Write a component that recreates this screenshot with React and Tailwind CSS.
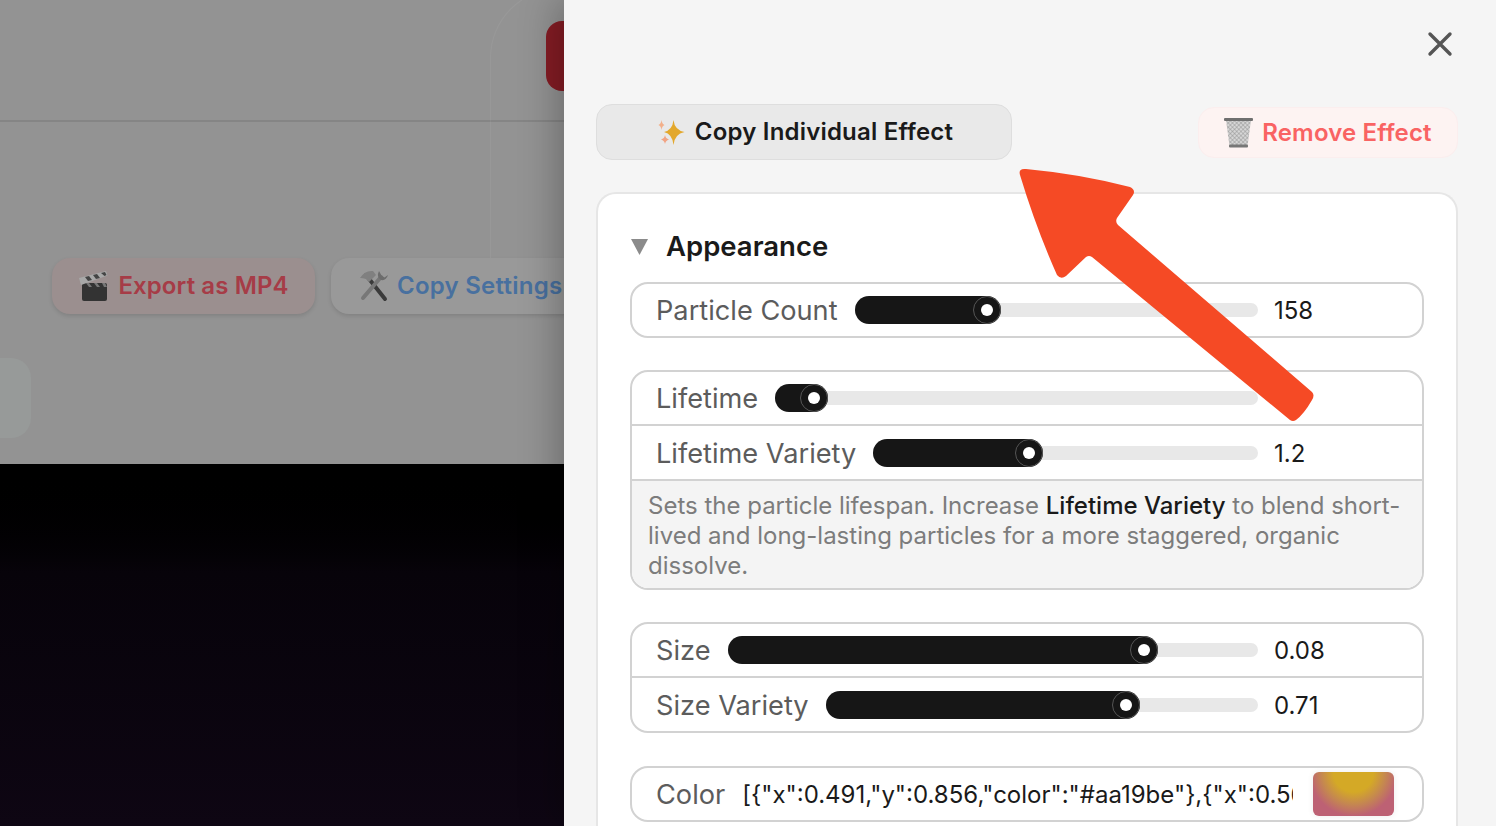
import React from 'react';

// Small drawn emoji, the picture uses Apple colour glyphs
const Sparkles = () => (
  <svg width="27" height="25" viewBox="0 0 27 25" className="shrink-0">
    <path d="M15.500 0 Q16.500 10 26.500 12 Q16.500 14 15.500 25 Q14.500 14 6 12 Q14.500 10 15.500 0Z" fill="#e3a82c" />
    <path d="M3.500 0 Q4 4 6.500 5 Q4 6 3.500 10 Q3 6 .5 5 Q3 4 3.500 0Z" fill="#f3b08a" />
    <path d="M7 15 Q7.500 18.500 11 19.500 Q7.500 20.500 7 24 Q6.500 20.500 3 19.500 Q6.500 18.500 7 15Z" fill="#f2a484" />
  </svg>
);

const Basket = () => (
  <svg width="29" height="30" viewBox="0 0 29 30" className="shrink-0">
    <defs>
      <pattern id="mesh" width="3" height="3" patternUnits="userSpaceOnUse" patternTransform="rotate(45)">
        <rect width="3" height="3" fill="#d6d6d6" />
        <path d="M0 0H3M0 0V3" stroke="#8f8f8f" strokeWidth="0.9" />
      </pattern>
    </defs>
    <path d="M2 2 L5.500 28 H23.500 L27 2Z" fill="url(#mesh)" />
    <rect x="0" y="0" width="29" height="3" rx="1" fill="#6f6f6f" />
    <rect x="5" y="26.500" width="19" height="3" rx="1" fill="#777" />
  </svg>
);

const Clapper = () => (
  <svg width="32" height="32" viewBox="0 0 32 32" className="shrink-0">
    <rect x="4" y="13" width="25" height="18" rx="2" fill="#333" />
    <path d="M8 13h3l3 4h-3zM16 13h3l3 4h-3zM24 13h3l2 4h-3z" fill="#777" />
    <path d="M1 8 L28 1 L29.500 5.500 L3 15Z" fill="#a8a8a8" />
    <path d="M7 7l4-1 3 4-4 1zM15 5l4-1 3 4-4 1zM23 3l4-1 1.500 3-2 1z" fill="#444" />
  </svg>
);

const Tools = () => (
  <svg width="30" height="32" viewBox="0 0 30 32" className="shrink-0">
    <path d="M7 5 L26 29" stroke="#3a3a3a" strokeWidth="4" strokeLinecap="round" />
    <path d="M1 8 Q6 0 14 1 L17 5 L10 12 L7 9 Q4 8 1 8Z" fill="#808080" />
    <path d="M22 7 L4 28" stroke="#777" strokeWidth="4" strokeLinecap="round" />
    <path d="M20 1 Q17 7 22 10 Q27 11 29 5 L25.500 7.500 L22.500 5.500Z" fill="#6c6c6c" />
  </svg>
);

const Slider = ({ fill }) => (
  <div className="relative h-[14px] flex-1 rounded-full bg-[#e8e8e8]">
    <div
      className="absolute left-0 top-[-7px] flex h-[28px] items-center justify-end rounded-full bg-[#161616]"
      style={{ width: fill }}
    >
      <div className="flex h-[28px] w-[28px] items-center justify-center rounded-full border border-[#555]">
        <div className="h-[12px] w-[12px] rounded-full bg-white"></div>
      </div>
    </div>
  </div>
);

const Row = ({ label, fill, value, divided }) => (
  <div className={`flex items-center pl-[24px] ${divided ? 'h-[55px] border-t-2 border-[#d2d2d2]' : 'h-[52px]'}`}>
    <span className={`mr-[17px] whitespace-nowrap text-[27.2px] text-[#5c5c5c] ${divided ? 'mt-[4px]' : 'mt-[2px]'}`}>{label}</span>
    <Slider fill={fill} />
    <span className="mt-[2px] w-[164px] shrink-0 pl-[16px] text-[24px] text-[#1a1a1a]">{value}</span>
  </div>
);

const Group = ({ children, className = '' }) => (
  <div className={`overflow-hidden rounded-[18px] border-2 border-[#d2d2d2] bg-white ${className}`}>{children}</div>
);

export default function App() {
  return (
    <div
      className="relative flex h-[826px] w-[1496px] overflow-hidden bg-black"
      style={{ fontFamily: 'Inter, "Liberation Sans", sans-serif' }}
    >
      {/* dimmed page behind the drawer */}
      <div className="relative flex w-[564px] shrink-0 flex-col overflow-hidden">
        <div className="flex h-[122px] shrink-0 items-start justify-end border-b-2 border-[#858585] bg-[#939393] pt-[21px]">
          <div className="h-[70px] w-[18px] rounded-l-[16px] bg-[#851c24]"></div>
        </div>
        <div className="h-[342px] shrink-0 bg-[#939393]">
          <div className="flex gap-[16px] pl-[52px] pt-[136px]">
            <div className="flex h-[56px] w-[263px] shrink-0 items-center justify-center gap-[8px] rounded-[18px] bg-[#9b8f8f] shadow-[0_2px_4px_rgba(0,0,0,0.12)]">
              <Clapper />
              <span className="whitespace-nowrap text-[24px] font-semibold tracking-[0.1px] text-[#a63c47]">Export as MP4</span>
            </div>
            <div className="flex h-[56px] w-[263px] shrink-0 items-center gap-[8px] rounded-[18px] bg-[#999999] pl-[28px] shadow-[0_2px_4px_rgba(0,0,0,0.12)]">
              <Tools />
              <span className="whitespace-nowrap text-[24px] font-semibold tracking-[0.25px] text-[#48709f]">Copy Settings</span>
            </div>
          </div>
          <div className="mt-[44px] h-[80px] w-[31px] rounded-r-[20px] bg-[#979a99]"></div>
        </div>
        <div className="flex-1 bg-gradient-to-b from-[#000000] via-[#07030a] via-30% to-[#0e0613]"></div>
        {/* faint outline of a card behind the overlay */}
        <div className="absolute left-[490px] top-[-12px] h-[270px] w-[120px] rounded-tl-[70px] border-l border-t border-white/5"></div>
      </div>

      {/* drawer */}
      <div className="z-10 flex min-w-0 flex-1 flex-col bg-[#f5f5f5] pl-[32px] pr-[38px] shadow-[-6px_0_36px_rgba(0,0,0,0.28)]">
        <div className="flex h-[104px] shrink-0 justify-end pr-[5px] pt-[31px]">
          <svg width="26" height="26" viewBox="0 0 26 26">
            <path d="M3 3L23 23M23 3L3 23" stroke="#555" strokeWidth="3.4" strokeLinecap="round" />
          </svg>
        </div>
        <div className="flex shrink-0 items-start justify-between">
          <div className="flex h-[56px] w-[416px] items-center justify-center gap-[10px] rounded-[16px] border border-[#dedede] bg-[#e9e9e9] pl-[3px]">
            <Sparkles />
            <span className="whitespace-nowrap text-[24px] font-semibold tracking-[0.2px] text-[#1a1a1a]">Copy Individual Effect</span>
          </div>
          <div className="mt-[3px] flex h-[51px] w-[260px] items-center justify-center gap-[9px] rounded-[16px] border border-[#fbeeee] bg-[#fdf3f2]">
            <Basket />
            <span className="whitespace-nowrap text-[24px] font-semibold tracking-[0.15px] text-[#f96363]">Remove Effect</span>
          </div>
        </div>

        <div className="mt-[32px] flex min-w-0 flex-col rounded-t-[20px] border-2 border-b-0 border-[#e6e6e6] bg-white px-[32px] pb-[20px]">
          <div className="flex h-[88px] shrink-0 items-center gap-[18px] pt-[18px]">
            <svg width="17" height="17" viewBox="0 0 17 17" className="mb-[2px] ml-[1px] shrink-0">
              <path d="M0 1H17L8.500 17Z" fill="#8b8b8b" />
            </svg>
            <span className="text-[27.5px] font-semibold text-[#1a1a1a]">Appearance</span>
          </div>
          <Group>
            <Row label="Particle Count" fill={146} value="158" />
          </Group>
          <Group className="mt-[32px]">
            <Row label="Lifetime" fill={53} value="" />
            <Row label="Lifetime Variety" fill={170} value="1.2" divided />
            <div className="border-t-2 border-[#d2d2d2] bg-[#f4f4f4] px-[16px] pb-[7px] pt-[10px] text-[24px] leading-[30px] text-[#7c7c7c]">
              Sets the particle lifespan. Increase <span className="font-medium text-[#1a1a1a]">Lifetime Variety</span> to blend short-lived and long-lasting particles for a more staggered, organic dissolve.
            </div>
          </Group>
          <Group className="mt-[32px]">
            <Row label="Size" fill={430} value="0.08" />
            <Row label="Size Variety" fill={314} value="0.71" divided />
          </Group>
          <Group className="mt-[33px]">
            <div className="flex h-[52px] items-center pl-[24px]">
              <span className="mr-[17px] mt-[2px] text-[27.2px] text-[#5c5c5c]">Color</span>
              <span className="mt-[2px] min-w-0 flex-1 overflow-hidden whitespace-nowrap text-[24px] text-[#1a1a1a]">
                {'[{"x":0.491,"y":0.856,"color":"#aa19be"},{"x":0.56,"y":0.41,"color":"#e0b020"}]'}
              </span>
              <div className="ml-[20px] mr-[28px] h-[44px] w-[81px] shrink-0 rounded-[6px] bg-[radial-gradient(circle_at_50%_0%,#d4a926_0px,#d4a926_20px,#c5884f_32px,#bd6174_44px)] shadow-[0_0_6px_rgba(0,0,0,0.08)]"></div>
            </div>
          </Group>
        </div>
      </div>

      {/* annotation arrow on top of everything */}
      <svg className="pointer-events-none absolute left-0 top-0 z-20" width="1496" height="826" viewBox="0 0 1496 826">
        <path
          d="M1020 175 Q1018 168 1026 169 Q1080 174 1130 187 Q1136 190 1133 195 L1117 218 Q1115 222 1118 225 L1312 392 Q1315 395 1312 400 Q1304 414 1296 420 Q1293 422 1290 420 L1092 257 Q1089 255 1086 257 L1066 276 Q1061 280 1057 275 Q1036 228 1020 175 Z"
          fill="#f54a25"
        />
      </svg>
    </div>
  );
}
